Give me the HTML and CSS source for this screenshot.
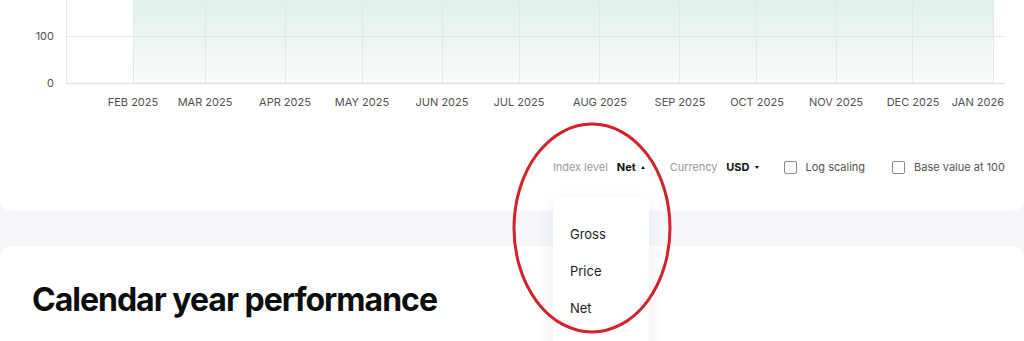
FILE: index.html
```html
<!DOCTYPE html>
<html lang="en">
<head>
<meta charset="utf-8">
<title>Index chart</title>
<link rel="stylesheet" href="styles.css">
</head>
<body>
<div class="page">
  <section class="card chart-card">
    <svg class="chart" width="1024" height="120" viewBox="0 0 1024 120">
      <defs>
        <linearGradient id="areaFill" x1="0" y1="0" x2="0" y2="1">
          <stop offset="0" stop-color="#e1f0eb"/>
          <stop offset="1" stop-color="#f9fbfa"/>
        </linearGradient>
      </defs>
      <rect x="133" y="0" width="860" height="83" fill="url(#areaFill)"/>
      <g stroke="#e4e7e7" stroke-width="1">
        <line x1="66" y1="36.5" x2="1005" y2="36.5"/>
        <line x1="66.5" y1="0" x2="66.5" y2="83"/>
        <line x1="133.5" y1="0" x2="133.5" y2="83"/>
        <line x1="205.5" y1="0" x2="205.5" y2="83"/>
        <line x1="285.5" y1="0" x2="285.5" y2="83"/>
        <line x1="362.5" y1="0" x2="362.5" y2="83"/>
        <line x1="442.5" y1="0" x2="442.5" y2="83"/>
        <line x1="519.5" y1="0" x2="519.5" y2="83"/>
        <line x1="599.5" y1="0" x2="599.5" y2="83"/>
        <line x1="679.5" y1="0" x2="679.5" y2="83"/>
        <line x1="756.5" y1="0" x2="756.5" y2="83"/>
        <line x1="836.5" y1="0" x2="836.5" y2="83"/>
        <line x1="912.5" y1="0" x2="912.5" y2="83"/>
        <line x1="993.5" y1="0" x2="993.5" y2="83"/>
      </g>
      <line x1="66" y1="83.5" x2="1005" y2="83.5" stroke="#e2e4e4" stroke-width="1.5"/>
      <g class="axis-text" text-anchor="end">
        <text x="54" y="40">100</text>
        <text x="54" y="87">0</text>
      </g>
      <g class="axis-text" text-anchor="middle">
        <text x="133" y="106">FEB 2025</text>
        <text x="205" y="106">MAR 2025</text>
        <text x="285" y="106">APR 2025</text>
        <text x="362" y="106">MAY 2025</text>
        <text x="442" y="106">JUN 2025</text>
        <text x="519" y="106">JUL 2025</text>
        <text x="600" y="106">AUG 2025</text>
        <text x="680" y="106">SEP 2025</text>
        <text x="757" y="106">OCT 2025</text>
        <text x="836" y="106">NOV 2025</text>
        <text x="913" y="106">DEC 2025</text>
        <text x="1004" y="106" text-anchor="end">JAN 2026</text>
      </g>
    </svg>

    <div class="controls">
      <div class="control select-control">
        <span class="control-label">Index level</span>
        <span class="control-value">Net</span>
        <span class="caret caret-up"></span>
        <ul class="dropdown">
          <li>Gross</li>
          <li>Price</li>
          <li>Net</li>
        </ul>
      </div>
      <div class="control">
        <span class="control-label">Currency</span>
        <span class="control-value">USD</span>
        <span class="caret caret-down"></span>
      </div>
      <label class="control check">
        <span class="box"></span>
        <span class="check-label">Log scaling</span>
      </label>
      <label class="control check">
        <span class="box"></span>
        <span class="check-label">Base value at 100</span>
      </label>
    </div>
  </section>

  <section class="card perf-card">
    <h2 class="perf-title">Calendar year performance</h2>
  </section>
</div>

<svg class="annotation" width="1024" height="341" viewBox="0 0 1024 341">
  <ellipse cx="592" cy="228" rx="78" ry="104" fill="none" stroke="#d3222b" stroke-width="3"/>
</svg>
</body>
</html>
```

FILE: styles.css
```css
* {
  box-sizing: border-box;
}

html, body {
  margin: 0;
  padding: 0;
}

body {
  background: #f5f6fc;
  font-family: Inter, "Noto Sans", "Liberation Sans", sans-serif;
  color: #111;
  width: 1024px;
  height: 341px;
  overflow: hidden;
  position: relative;
}

.page {
  display: flex;
  flex-direction: column;
  gap: 35px;
}

.card {
  background: #fff;
}

.chart-card {
  height: 211px;
  border-radius: 0 0 12px 12px;
  display: flex;
  flex-direction: column;
}

.chart {
  display: block;
}

.axis-text {
  font-family: Inter, "Noto Sans", "Liberation Sans", sans-serif;
  font-size: 11px;
  fill: #505050;
}

.controls {
  margin-top: 39px;
  display: flex;
  justify-content: flex-end;
  align-items: center;
  gap: 25px;
  padding-right: 19px;
  font-size: 11px;
  line-height: 16px;
}

.control {
  display: flex;
  align-items: center;
  position: relative;
}

.control-label {
  color: #9a9a9a;
  margin-right: 9px;
  letter-spacing: -0.05px;
}

.control-value {
  font-weight: 700;
  color: #111;
}

.caret {
  width: 0;
  height: 0;
  margin-left: 5px;
  border-left: 2.5px solid transparent;
  border-right: 2.5px solid transparent;
}

.caret-up {
  border-bottom: 3px solid #111;
}

.caret-down {
  border-top: 3px solid #111;
}

.check {
  gap: 9px;
}

.check + .check {
  margin-left: 2px;
}

.box {
  width: 13px;
  height: 13px;
  border: 1px solid #8a8a8a;
  border-radius: 2px;
  background: #fff;
}

.check-label {
  color: #555;
}

.dropdown {
  position: absolute;
  left: 0;
  top: 38px;
  width: 96px;
  height: 160px;
  margin: 0;
  padding: 22px 0 0 17px;
  list-style: none;
  background: #fff;
  border-radius: 8px;
  box-shadow: 0 4px 18px rgba(30, 40, 80, 0.08);
  z-index: 2;
}

.dropdown li {
  height: 37px;
  line-height: 31px;
  font-size: 13px;
  color: #1c1c1c;
}

.perf-card {
  border-radius: 12px 12px 0 0;
  padding: 35px 32px 40px;
  min-height: 120px;
}

.perf-title {
  margin: 0;
  font-size: 32px;
  line-height: 38px;
  font-weight: 700;
  letter-spacing: -1px;
  color: #0d0d0d;
}

.annotation {
  position: absolute;
  left: 0;
  top: 0;
  pointer-events: none;
  z-index: 5;
}
```
